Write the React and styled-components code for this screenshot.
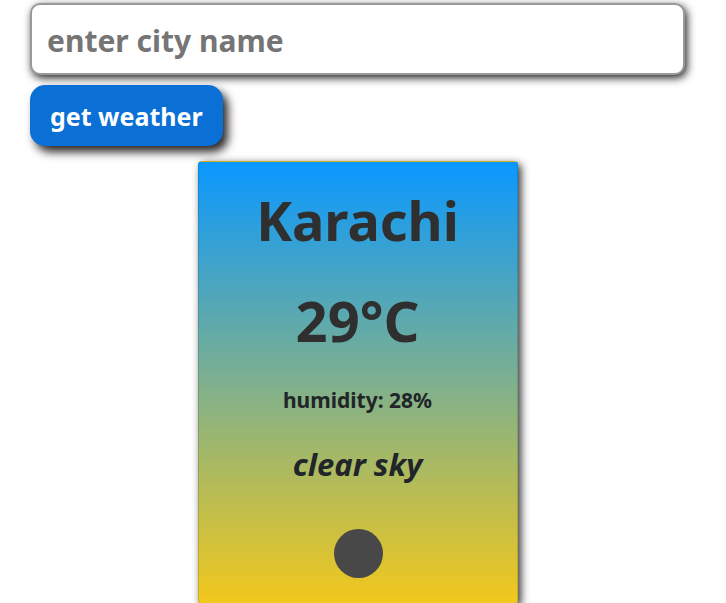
import React from "react";
import styled, { createGlobalStyle } from "styled-components";

const GlobalStyle = createGlobalStyle`
  *, *::before, *::after { box-sizing: border-box; }
  body {
    margin: 0;
    overflow: hidden auto;
    scrollbar-width: none;
    background: #fff;
    color: #212529;
    font-family: "Noto Sans", "Open Sans", sans-serif;
  }
`;

const Page = styled.main`
  padding: 3px 41px 0 30px;
`;

const SearchForm = styled.form`
  display: flex;
  flex-direction: column;
  align-items: flex-start;
  gap: 10px;
`;

const CityInput = styled.input`
  width: 100%;
  height: 72px;
  padding: 2px 15px 0;
  border: 2px solid #999;
  border-radius: 10px;
  box-shadow: 2px 3px 8px #222;
  font: 700 30px "Noto Sans", sans-serif;
  color: #212529;
  outline: none;
  &::placeholder { color: #757575; opacity: 1; }
`;

const WeatherButton = styled.button`
  height: 61px;
  padding: 0 20px;
  border: 0;
  border-radius: 15px;
  background: #0a70d6;
  box-shadow: 5px 6px 10px #2c2626;
  color: #fff;
  font: 700 25px "Noto Sans", sans-serif;
  cursor: pointer;
`;

const Card = styled.section`
  display: flex;
  flex-direction: column;
  align-items: center;
  width: 320px;
  max-width: 100%;
  margin: 15px auto 0;
  padding: 16px 16px 25px;
  border: 1px solid rgba(0, 0, 0, 0.125);
  border-radius: 4px;
  background: linear-gradient(#0a98ff, #f2c81c);
  box-shadow: 3px 3px 8px #333;
`;

const Headline = styled.h1`
  margin: 0 0 16px;
  font-size: 54px;
  line-height: 84px;
  font-weight: 700;
  color: #2f2f2f;
`;

const Temperature = styled(Headline)`
  margin: 0 0 22px;
  font-size: 56px;
`;

const Detail = styled.p`
  margin: 0 0 24px;
  font-size: 21px;
  line-height: 32px;
  font-weight: 700;
`;

const Condition = styled(Detail)`
  margin: 0 0 41px;
  font-size: 31px;
  line-height: 48px;
  font-style: italic;
`;

const Icon = styled.svg`
  display: block;
  width: 50px;
  height: 49px;
`;

export default function App() {
  return (
    <Page>
      <GlobalStyle />
      <SearchForm onSubmit={(e) => e.preventDefault()}>
        <CityInput aria-label="City name" placeholder="enter city name" />
        <WeatherButton type="submit">get weather</WeatherButton>
      </SearchForm>
      <Card>
        <Headline>Karachi</Headline>
        <Temperature as="h2">29°C</Temperature>
        <Detail>humidity: 28%</Detail>
        <Condition>clear sky</Condition>
        <Icon viewBox="0 0 50 49" aria-hidden="true">
          <circle cx="25.5" cy="24.5" r="24.5" fill="#484848" />
        </Icon>
      </Card>
    </Page>
  );
}
